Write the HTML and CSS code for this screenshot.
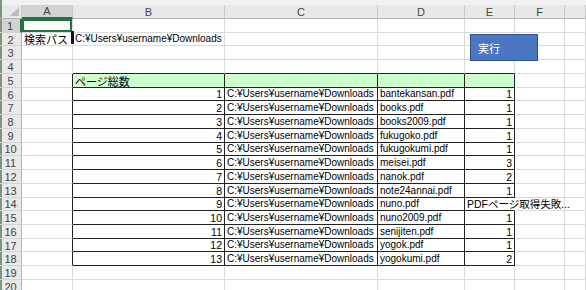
FILE: index.html
```html
<!DOCTYPE html>
<html lang="ja">
<head>
  <meta charset="UTF-8" />
  <title>PDFページ数</title>
  <link rel="stylesheet" href="styles.css">
</head>
<body>

  <div class="sheet">
    <div class="strip"></div>

    <!-- column headers -->
    <div class="corner"></div>
    <div class="colhead sel">A</div>
    <div class="colhead">B</div>
    <div class="colhead">C</div>
    <div class="colhead">D</div>
    <div class="colhead">E</div>
    <div class="colhead">F</div>
    <div class="colhead"></div>

    <!-- 1 -->
    <div class="rowhead sel">1</div>
    <div class="cell active"></div>
    <div class="cell"></div><div class="cell"></div><div class="cell"></div><div class="cell"></div><div class="cell"></div><div class="cell"></div>

    <!-- 2 -->
    <div class="rowhead">2</div>
    <div class="cell handle">検索パス</div>
    <div class="cell over">C:¥Users¥username¥Downloads</div>
    <div class="cell"></div><div class="cell"></div><div class="cell"></div><div class="cell"></div><div class="cell"></div>

    <!-- 3 -->
    <div class="rowhead">3</div>
    <div class="cell"></div><div class="cell"></div><div class="cell"></div><div class="cell"></div><div class="cell"></div><div class="cell"></div><div class="cell"></div>

    <!-- 4 -->
    <div class="rowhead">4</div>
    <div class="cell"></div>
    <div class="cell above"></div><div class="cell above"></div><div class="cell above"></div><div class="cell above"></div>
    <div class="cell"></div><div class="cell"></div>

    <!-- 5 -->
    <div class="rowhead">5</div>
    <div class="cell left"></div>
    <div class="cell t head">ページ総数</div>
    <div class="cell t head"></div>
    <div class="cell t head"></div>
    <div class="cell t head"></div>
    <div class="cell"></div><div class="cell"></div>

    <!-- 6 -->
    <div class="rowhead">6</div>
    <div class="cell left"></div>
    <div class="cell t num">1</div>
    <div class="cell t">C:¥Users¥username¥Downloads</div>
    <div class="cell t">bantekansan.pdf</div>
    <div class="cell t num">1</div>
    <div class="cell"></div><div class="cell"></div>

    <!-- 7 -->
    <div class="rowhead">7</div>
    <div class="cell left"></div>
    <div class="cell t num">2</div>
    <div class="cell t">C:¥Users¥username¥Downloads</div>
    <div class="cell t">books.pdf</div>
    <div class="cell t num">1</div>
    <div class="cell"></div><div class="cell"></div>

    <!-- 8 -->
    <div class="rowhead">8</div>
    <div class="cell left"></div>
    <div class="cell t num">3</div>
    <div class="cell t">C:¥Users¥username¥Downloads</div>
    <div class="cell t">books2009.pdf</div>
    <div class="cell t num">1</div>
    <div class="cell"></div><div class="cell"></div>

    <!-- 9 -->
    <div class="rowhead">9</div>
    <div class="cell left"></div>
    <div class="cell t num">4</div>
    <div class="cell t">C:¥Users¥username¥Downloads</div>
    <div class="cell t">fukugoko.pdf</div>
    <div class="cell t num">1</div>
    <div class="cell"></div><div class="cell"></div>

    <!-- 10 -->
    <div class="rowhead">10</div>
    <div class="cell left"></div>
    <div class="cell t num">5</div>
    <div class="cell t">C:¥Users¥username¥Downloads</div>
    <div class="cell t">fukugokumi.pdf</div>
    <div class="cell t num">1</div>
    <div class="cell"></div><div class="cell"></div>

    <!-- 11 -->
    <div class="rowhead">11</div>
    <div class="cell left"></div>
    <div class="cell t num">6</div>
    <div class="cell t">C:¥Users¥username¥Downloads</div>
    <div class="cell t">meisei.pdf</div>
    <div class="cell t num">3</div>
    <div class="cell"></div><div class="cell"></div>

    <!-- 12 -->
    <div class="rowhead">12</div>
    <div class="cell left"></div>
    <div class="cell t num">7</div>
    <div class="cell t">C:¥Users¥username¥Downloads</div>
    <div class="cell t">nanok.pdf</div>
    <div class="cell t num">2</div>
    <div class="cell"></div><div class="cell"></div>

    <!-- 13 -->
    <div class="rowhead">13</div>
    <div class="cell left"></div>
    <div class="cell t num">8</div>
    <div class="cell t">C:¥Users¥username¥Downloads</div>
    <div class="cell t">note24annai.pdf</div>
    <div class="cell t num">1</div>
    <div class="cell"></div><div class="cell"></div>

    <!-- 14 -->
    <div class="rowhead">14</div>
    <div class="cell left"></div>
    <div class="cell t num">9</div>
    <div class="cell t">C:¥Users¥username¥Downloads</div>
    <div class="cell t">nuno.pdf</div>
    <div class="cell t over open">PDFページ取得失敗...</div>
    <div class="cell"></div><div class="cell"></div>

    <!-- 15 -->
    <div class="rowhead">15</div>
    <div class="cell left"></div>
    <div class="cell t num">10</div>
    <div class="cell t">C:¥Users¥username¥Downloads</div>
    <div class="cell t">nuno2009.pdf</div>
    <div class="cell t num">1</div>
    <div class="cell"></div><div class="cell"></div>

    <!-- 16 -->
    <div class="rowhead">16</div>
    <div class="cell left"></div>
    <div class="cell t num">11</div>
    <div class="cell t">C:¥Users¥username¥Downloads</div>
    <div class="cell t">senijiten.pdf</div>
    <div class="cell t num">1</div>
    <div class="cell"></div><div class="cell"></div>

    <!-- 17 -->
    <div class="rowhead">17</div>
    <div class="cell left"></div>
    <div class="cell t num">12</div>
    <div class="cell t">C:¥Users¥username¥Downloads</div>
    <div class="cell t">yogok.pdf</div>
    <div class="cell t num">1</div>
    <div class="cell"></div><div class="cell"></div>

    <!-- 18 -->
    <div class="rowhead">18</div>
    <div class="cell left"></div>
    <div class="cell t num">13</div>
    <div class="cell t">C:¥Users¥username¥Downloads</div>
    <div class="cell t">yogokumi.pdf</div>
    <div class="cell t num">2</div>
    <div class="cell"></div><div class="cell"></div>

    <!-- 19 -->
    <div class="rowhead">19</div>
    <div class="cell"></div><div class="cell"></div><div class="cell"></div><div class="cell"></div><div class="cell"></div><div class="cell"></div><div class="cell"></div>

    <!-- 20 -->
    <div class="rowhead">20</div>
    <div class="cell"></div><div class="cell"></div><div class="cell"></div><div class="cell"></div><div class="cell"></div><div class="cell"></div><div class="cell"></div>

    <button class="run">実行</button>
  </div>

</body>
</html>
```

FILE: styles.css
```css
body {
  margin: 0;
  background-color: white;
  font-family: "Liberation Sans", "Noto Sans CJK JP", sans-serif;
  font-size: 10px;
  color: black;
  overflow: hidden;
}

.sheet {
  position: relative;
  display: grid;
  grid-template-columns: 22px 51px 152px 153px 87px 50px 50px 21px;
  grid-template-rows: 5px 14px repeat(20, 13.74px);
  width: 586px;
  height: 290px;
  overflow: hidden;
}

.strip {
  grid-column: 1 / -1;
  background-color: #f1f1f1;
  box-shadow: inset 2px 0 0 #7f957f;
}

.corner,
.colhead,
.rowhead {
  box-sizing: border-box;
  background-color: #e9e9e9;
  color: #444;
  font-size: 11px;
  display: flex;
  align-items: center;
  justify-content: center;
  border-right: 1px solid #c8c8c8;
  border-bottom: 1px solid #b4b4b4;
}

.corner {
  position: relative;
  box-shadow: inset 2px 0 0 #7f957f;
}

.corner::after {
  content: "";
  position: absolute;
  right: 2px;
  bottom: 2px;
  border-left: 9px solid transparent;
  border-bottom: 9px solid #bcbcbc;
}

.rowhead {
  border-bottom-color: #d4d4d4;
  border-right-color: #b4b4b4;
  box-shadow: inset 2px 0 0 #7f957f;
  padding-top: 1px;
}

.colhead.sel {
  background-color: #d3d3d3;
  border-bottom: 2px solid #217346;
}

.rowhead.sel {
  background-color: #d3d3d3;
  border-right: 2px solid #217346;
}

.cell {
  box-sizing: border-box;
  border-right: 1px solid #dadada;
  border-bottom: 1px solid #dadada;
  padding: 0 2px;
  display: flex;
  align-items: flex-end;
  line-height: 12px;
  white-space: nowrap;
  overflow: hidden;
}

.active {
  box-shadow: inset 0 0 0 2px #217346;
}

.handle {
  position: relative;
  overflow: visible;
  font-family: "Noto Sans CJK JP", sans-serif;
  font-size: 11px;
}

.handle::after {
  content: "";
  position: absolute;
  right: -2px;
  top: -2px;
  width: 3px;
  height: 13px;
  background-color: #111;
}

.over {
  position: relative;
  z-index: 1;
  overflow: visible;
}

.above {
  border-bottom-color: #222;
}

.left {
  border-right-color: #222;
}

.t {
  border-right-color: #222;
  border-bottom-color: #222;
}

.t.open {
  border-right-color: transparent;
  font-size: 10.5px;
}

.head {
  background-color: #ccffcc;
  font-family: "Noto Sans CJK JP", sans-serif;
  font-size: 11px;
}

.num {
  justify-content: flex-end;
  font-size: 10.5px;
}

.run {
  position: absolute;
  left: 470px;
  top: 34px;
  width: 68px;
  height: 27px;
  box-sizing: border-box;
  background-color: #4a76c4;
  border: 1px solid #2f528f;
  color: white;
  font-family: "Noto Sans CJK JP", sans-serif;
  font-size: 11px;
  text-align: left;
  padding: 0 0 0 7px;
  border-radius: 0;
}
```
